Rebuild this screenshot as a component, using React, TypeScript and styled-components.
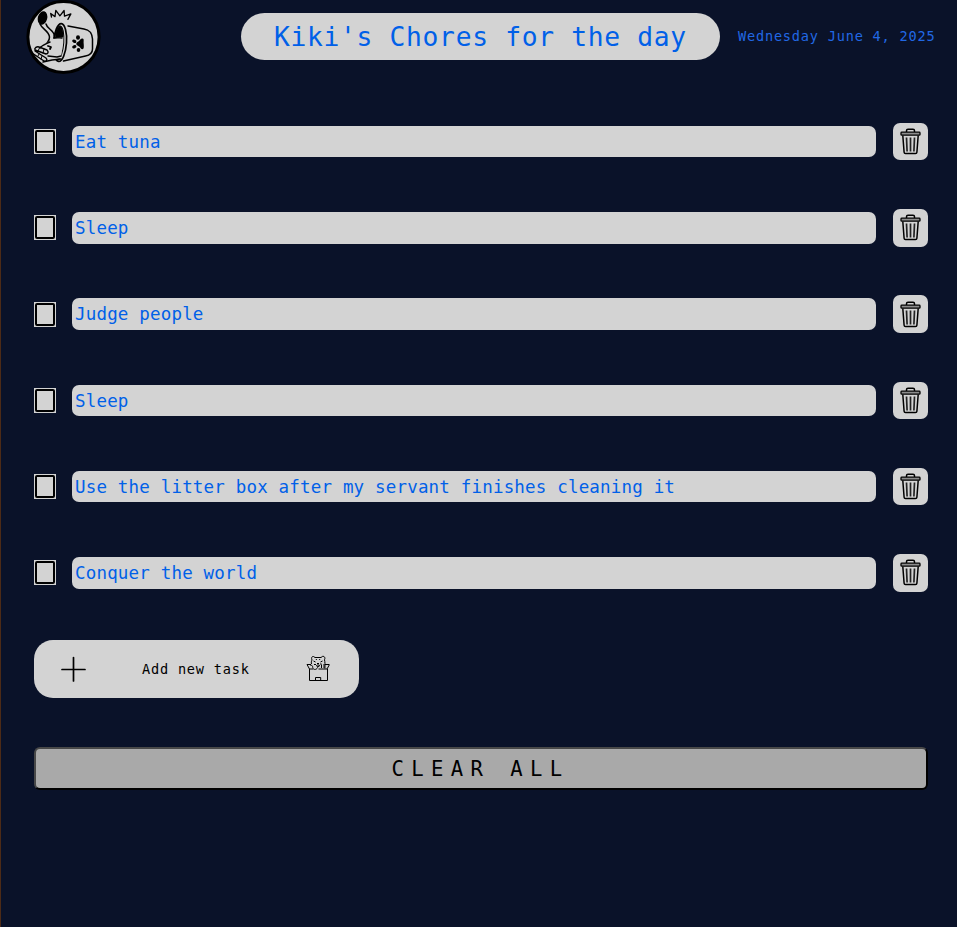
import React from 'react';
import styled, { createGlobalStyle } from 'styled-components';

const GlobalStyle = createGlobalStyle`
  *, *::before, *::after { box-sizing: border-box; }
  body { margin: 0; background: #0a1229; }
`;

const Page = styled.main`
  min-height: 927px;
  border-left: 1px solid #4d2b17;
  background: #0a1229;
  font-family: Consolas, 'DejaVu Sans Mono', monospace;
  color: #0060e8;
  overflow: hidden;
`;

const Header = styled.header`
  display: flex;
  align-items: flex-start;
  height: 74px;
  padding-left: 25px;
`;

const Logo = styled.svg`
  flex: none;
  width: 76px;
  height: 75px;
`;

const Title = styled.h1`
  flex: none;
  width: 479px;
  height: 47px;
  margin: 13px 0 0 139px;
  padding-left: 33px;
  border-radius: 24px;
  background: #d3d3d3;
  font-size: 26.3px;
  font-weight: 400;
  line-height: 48px;
  letter-spacing: 0.68px;
  white-space: pre;
`;

const Today = styled.time`
  margin: 26px 0 0 18px;
  color: #2168e4;
  font-size: 13.6px;
  line-height: 20px;
  letter-spacing: 0.79px;
  white-space: pre;
`;

const TaskList = styled.ul`
  display: grid;
  grid-auto-rows: 37.5px;
  row-gap: 48.75px;
  margin: 48.8px 0 0;
  padding: 0 29px 0 33px;
  list-style: none;
`;

const TaskRow = styled.li`
  display: flex;
  align-items: center;
`;

const Check = styled.button`
  display: flex;
  flex: none;
  width: 22px;
  height: 25px;
  margin-right: 16px;
  padding: 1px;
  border: 0;
  background: #d3d3d3;

  &::before {
    content: '';
    flex: 1;
    align-self: stretch;
    border: 2px solid #000;
    border-radius: 2px;
  }
`;

const TaskText = styled.div`
  width: 804px;
  height: 31.5px;
  margin-right: 17px;
  padding-left: 3px;
  border-radius: 7px;
  background: #d3d3d3;
  font-size: 17.5px;
  line-height: 32px;
  letter-spacing: 0.18px;
  white-space: pre;
`;

const DeleteButton = styled.button`
  display: flex;
  align-items: center;
  justify-content: center;
  width: 35px;
  height: 37.5px;
  padding: 0 1px 0 0;
  border: 0;
  border-radius: 7px;
  background: #d3d3d3;
`;

const AddButton = styled.button`
  display: flex;
  align-items: center;
  width: 325px;
  height: 58px;
  margin: 48.2px 0 0 33px;
  padding: 0 28px 0 26px;
  border: 0;
  border-radius: 19px;
  background: #d3d3d3;
  color: #000;
  font: 13.6px/20px Consolas, 'DejaVu Sans Mono', monospace;
  letter-spacing: 0.79px;
`;

const AddLabel = styled.span`
  width: 109px;
  margin: 0 55px 0 56px;
  text-align: left;
  white-space: pre;
`;

const ClearButton = styled.button`
  display: block;
  width: 894px;
  height: 43px;
  margin: 49px 0 0 33px;
  padding: 1px 1px 0 0;
  border: 2px solid;
  border-color: #484848 #000 #000 #484848;
  border-radius: 6px;
  background: #a9a9a9;
  color: #000;
  font: 20.6px/38px Consolas, 'DejaVu Sans Mono', monospace;
  letter-spacing: 7.4px;
  white-space: pre;
`;

function CatLogo() {
  return (
    <Logo viewBox="0 0 76 75" fill="none" stroke="#000" strokeLinecap="round" strokeLinejoin="round">
      <circle cx="37.5" cy="37" r="35.6" fill="#d3d3d3" strokeWidth="3" />
      <path d="m25.5 17-.8-3.5 4.3 3.1.8-6.3 4.1 5.5 4.2-5.3.4 5.7 6.4-2.3-3 5.5" strokeWidth="1.3" />
      <path d="M14 24c2 5 9 7 9.5 13 .2 4-2.5 5-3.5 8M20 24c1 5 8 6 8.5 12" strokeWidth="1.5" />
      <ellipse cx="16.5" cy="18" rx="4.7" ry="6.9" transform="rotate(15 16.5 18)" fill="#000" stroke="none" />
      <ellipse cx="34" cy="42.5" rx="6.5" ry="19" transform="rotate(4 34 42.5)" fill="#d3d3d3" strokeWidth="1.7" />
      <ellipse cx="33" cy="42.5" rx="4.8" ry="16.5" transform="rotate(4 33 42.5)" strokeWidth="1" />
      <path d="M29.5 38c0-6 2-11 4.5-12 2.5 0 3.5 6 3 11-2 0-5 0-7.5 1Z" fill="#000" strokeWidth=".6" />
      <path d="m42 26 16 3c6 1 8 4 8.500 10v10c0 4-2 6-7 7l-22 5" strokeWidth="1.5" />
      <path d="M37 38c-5 0-10-1-13 3-4 3-8 4-11 8l9 12 13-3Z" fill="#d3d3d3" stroke="none" />
      <path d="M36 38c-3-.5-5 .2-8 0M24 42c-4 2-8 3-10 6M22 56l9 1 4-1M17 62l9-2 9-1" strokeWidth="1.4" />
      <path d="m13 47 8 3c2 2 1 4-1 4L9 50c-1-2 2-4 4-3ZM9 51l11 7c2 2 0 4-2 3L7.5 54" strokeWidth="1.4" />
      <path d="m14 47-2 4m6-2-1 4m-4 1-1 2m4 0-1 3" strokeWidth="1" />
      <path d="m22 46 3 1-1 2" strokeWidth="1.8" />
      <path d="M56.5 38.5c1.8.2 1 2.3 1.2 5.2.2 3 .5 5.3-1.4 5.5-1.8.2-1.5-1.7-3.2-2.6-2-1-3-1.7-2.8-3 .2-1.5 2-1.6 3-2.9 1-1.2 1.5-2.4 3.2-2.2Z" fill="#000" stroke="none" />
      <g fill="#000" stroke="none">
        <ellipse cx="52" cy="37.5" rx="2" ry="2.2" />
        <ellipse cx="48.3" cy="41.3" rx="2.2" ry="1.6" transform="rotate(25 48.3 41.3)" />
        <ellipse cx="48.3" cy="46.8" rx="2.2" ry="1.6" transform="rotate(-20 48.3 46.8)" />
        <ellipse cx="52.5" cy="50" rx="1.8" ry="2.1" />
      </g>
    </Logo>
  );
}

function TrashIcon() {
  return (
    <svg width="21" height="27" viewBox="0 0 21 27" fill="none" stroke="#000" strokeLinejoin="round">
      <path d="M6.5 4V2.8q0-1.5 1.5-1.5h5q1.5 0 1.5 1.5V4" strokeWidth="1.5" />
      <rect x="1" y="4.2" width="19" height="3" rx=".8" fill="#8c8c8c" strokeWidth="1.3" />
      <path d="m2.8 7.5 1.3 16.7q.1 1.4 1.4 1.4h10q1.3 0 1.4-1.4L18.2 7.5" strokeWidth="1.5" />
      <path d="m6.5 9.5.6 14m3.4-14v14m4-14-.6 14" stroke="#222" strokeWidth="1.7" />
    </svg>
  );
}

function PlusIcon() {
  return (
    <svg width="26" height="26" viewBox="0 0 26 26" fill="none" stroke="#000" strokeWidth="1.7" strokeLinecap="round">
      <path d="M13.5 1.5v23.5M2 13.500h23" />
    </svg>
  );
}

function BoxCatIcon() {
  return (
    <svg width="24" height="27" viewBox="0 0 24 27" fill="none" stroke="#000" strokeWidth="1" strokeLinejoin="round">
      <path d="M3.5 14v11.5h18V14M1 9.5h4M19 9.5h4M1 9.5l2.5 4.5H7M23.5 9.5l-2.5 4.5h-8.5M9.5 25.5v-3h5.2v3" />
      <path d="M5.5 9C5 7.5 5.5 6 6 5c-1-2 0-4 1.500-3.500L9 2.500h6l1.700-1.200c1.800-.4 2.800 1.600 1.800 3.500.5 2 .6 5 .4 8.700" />
      <path d="M4.5 10.5c2-.5 2.2.8 2.2 1.8 0 2 2.5 3 4.300 1.200 1-1.500 1-2.500 2.500-3.200M15.500 13v-3.500M18 13V9" />
      <path d="m7.5 6 2 1m7-1-2 1m-3.5 1 1 1 1-1m-1 1v1.5m-2 0q2 2 4 0M10 4l.7 1M14 4l-.7 1M8 9.5h2m4-.5h1.5" />
    </svg>
  );
}

const tasks = [
  'Eat tuna',
  'Sleep',
  'Judge people',
  'Sleep',
  'Use the litter box after my servant finishes cleaning it',
  'Conquer the world',
];

export default function App() {
  return (
    <Page>
      <GlobalStyle />
      <Header>
        <CatLogo />
        <Title>Kiki's Chores for the day</Title>
        <Today>Wednesday June 4, 2025</Today>
      </Header>
      <TaskList>
        {tasks.map((task, index) => (
          <TaskRow key={index}>
            <Check role="checkbox" aria-checked={false} aria-label={task} />
            <TaskText>{task}</TaskText>
            <DeleteButton aria-label="Delete"><TrashIcon /></DeleteButton>
          </TaskRow>
        ))}
      </TaskList>
      <AddButton>
        <PlusIcon />
        <AddLabel>Add new task</AddLabel>
        <BoxCatIcon />
      </AddButton>
      <ClearButton>CLEAR ALL</ClearButton>
    </Page>
  );
}
